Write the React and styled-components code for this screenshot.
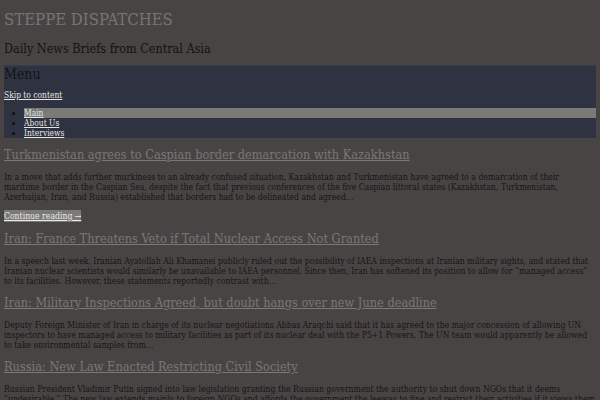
import React from 'react';
import styled, { createGlobalStyle } from 'styled-components';

const GlobalStyle = createGlobalStyle`
  html, body {
    margin: 0;
    padding: 0;
    background: #494444;
  }
  body {
    padding: 0 4px;
    font-family: "DejaVu Serif Condensed", "DejaVu Serif", serif;
    font-stretch: condensed;
    color: #1d1a1a;
  }
`;

const SiteTitle = styled.h1`
  margin: 10px 0 0;
  font-size: 16.6px;
  line-height: 20px;
  font-weight: normal;
  text-transform: uppercase;
  a {
    color: #777474;
    text-decoration: none;
  }
`;

const Tagline = styled.h2`
  margin: 11px 0 0;
  font-size: 12.5px;
  line-height: 16px;
  font-weight: normal;
  color: #141111;
`;

const Nav = styled.nav`
  margin-top: 8px;
  background: #2f3341;
  border-top: 1px solid #3a3d48;
`;

const MenuHeading = styled.h3`
  margin: 0;
  font-size: 14px;
  line-height: 17px;
  font-weight: normal;
  color: #141419;
`;

const SkipLink = styled.a`
  display: block;
  margin-top: 6px;
  font-size: 8.4px;
  line-height: 12px;
  color: #e4e4e4;
`;

const MenuList = styled.ul`
  margin: 7px 0 0;
  padding: 0 0 0 20px;
  font-size: 8.4px;
  line-height: 10px;
  color: #111;
`;

const MenuItem = styled.li`
  background: ${(p) => (p.$current ? '#7a7a76' : 'transparent')};
  a {
    color: #e4e4e4;
  }
`;

const Article = styled.article`
  margin-top: 8px;
`;

const PostTitle = styled.h2`
  margin: 0;
  font-size: 12.65px;
  line-height: 18px;
  font-weight: normal;
  a {
    color: #7a7777;
  }
`;

const Excerpt = styled.p`
  margin: 8px 0 0;
  font-size: 8.6px;
  line-height: 10px;
  color: #171414;
`;

const MoreLink = styled.a`
  display: table;
  margin-top: 8px;
  font-size: 8.6px;
  line-height: 12px;
  color: #e8e8e8;
  background: #7a7a76;
`;

const posts = [
  {
    title: 'Turkmenistan agrees to Caspian border demarcation with Kazakhstan',
    excerpt:
      'In a move that adds further murkiness to an already confused situation, Kazakhstan and Turkmenistan have agreed to a demarcation of their maritime border in the Caspian Sea, despite the fact that previous conferences of the five Caspian littoral states (Kazakhstan, Turkmenistan, Azerbaijan, Iran, and Russia) established that borders had to be delineated and agreed…',
    more: true,
  },
  {
    title: 'Iran: France Threatens Veto if Total Nuclear Access Not Granted',
    excerpt:
      'In a speech last week, Iranian Ayatollah Ali Khamanei publicly ruled out the possibility of IAEA inspections at Iranian military sights, and stated that Iranian nuclear scientists would similarly be unavailable to IAEA personnel. Since then, Iran has softened its position to allow for “managed access” to its facilities. However, these statements reportedly contrast with…',
  },
  {
    title: 'Iran: Military Inspections Agreed, but doubt hangs over new June deadline',
    excerpt:
      'Deputy Foreign Minister of Iran in charge of its nuclear negotiations Abbas Araqchi said that it has agreed to the major concession of allowing UN inspectors to have managed access to military facilities as part of its nuclear deal with the P5+1 Powers. The UN team would apparently be allowed to take environmental samples from…',
  },
  {
    title: 'Russia: New Law Enacted Restricting Civil Society',
    excerpt:
      'Russian President Vladimir Putin signed into law legislation granting the Russian government the authority to shut down NGOs that it deems “undesirable.” The new law extends mainly to foreign NGOs and affords the government the leeway to fine and restrict their activities if it views them as a threat to the constitutional order…',
  },
];

const App = () => (
  <>
    <GlobalStyle />
    <header>
      <SiteTitle>
        <a href="#">Steppe Dispatches</a>
      </SiteTitle>
      <Tagline>Daily News Briefs from Central Asia</Tagline>
    </header>
    <Nav>
      <MenuHeading>Menu</MenuHeading>
      <SkipLink href="#content">Skip to content</SkipLink>
      <MenuList>
        <MenuItem $current>
          <a href="#">Main</a>
        </MenuItem>
        <MenuItem>
          <a href="#">About Us</a>
        </MenuItem>
        <MenuItem>
          <a href="#">Interviews</a>
        </MenuItem>
      </MenuList>
    </Nav>
    <main id="content">
      {posts.map((post) => (
        <Article key={post.title}>
          <PostTitle>
            <a href="#">{post.title}</a>
          </PostTitle>
          <Excerpt>{post.excerpt}</Excerpt>
          {post.more && <MoreLink href="#">Continue reading →</MoreLink>}
        </Article>
      ))}
    </main>
  </>
);

export default App;
